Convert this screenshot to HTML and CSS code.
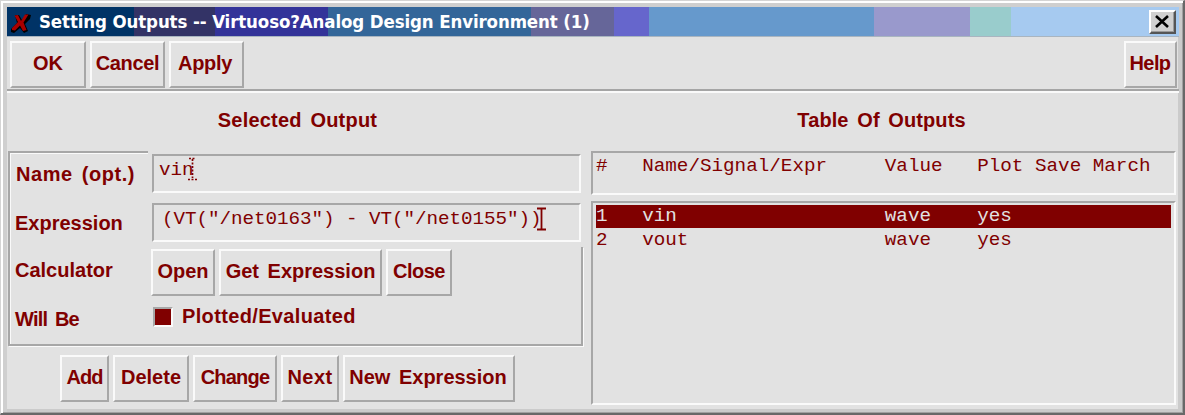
FILE: index.html
```html
<!DOCTYPE html>
<html lang="en">
<head>
<meta charset="utf-8">
<title>Setting Outputs</title>
<link rel="stylesheet" href="styles.css">
</head>
<body>
<main class="window">
  <header class="titlebar">
    <svg class="app-icon" width="20" height="22" viewBox="0 0 20 22"><path d="M4 3h4l3 5 4-6 5 1-1 4-5 5 3 7-4 2-4-5-6 5-3-1v-3l6-6z" fill="#000"/><path d="M3.500 3.500l3.500-.5 3 6 4-6.500h3.500l-5 8 3 7.500-3.500 1-3-5.500-5 5-3-.5v-2l6-6z" fill="#a80000"/></svg>
    <h1 class="title">Setting Outputs -- Virtuoso?Analog Design Environment (1)</h1>
    <button class="close" aria-label="Close window"><svg width="14" height="13" viewBox="0 0 14 13"><path d="M1 1l12 11M13 1L1 12" stroke="#000" stroke-width="2.6"/></svg></button>
  </header>
  <nav class="toolbar">
    <button class="btn ok">OK</button>
    <button class="btn cancel">Cancel</button>
    <button class="btn apply">Apply</button>
    <button class="btn help">Help</button>
  </nav>
  <div class="content">
    <section class="selected">
      <h2 class="heading">Selected Output</h2>
      <div class="fields">
        <label class="label name-label">Name (opt.)</label>
        <div class="field name-field">vin<svg class="caret" width="9" height="24" viewBox="0 0 9 24"><path d="M1 1.500h7M4.500 2v19M0 22.500h9" fill="none" stroke="#800000" stroke-width="1.7" stroke-dasharray="2 1.500"/></svg></div>
        <label class="label expr-label">Expression</label>
        <div class="field expr-field">(VT("/net0163") - VT("/net0155"))<svg class="caret" width="9" height="24" viewBox="0 0 9 24"><path d="M0 1.500h9M4.500 2v20M0 22.500h9" fill="none" stroke="#800000" stroke-width="1.8"/></svg></div>
      </div>
      <div class="options">
        <span class="label calc-label">Calculator</span>
        <div class="calc-buttons">
          <button class="btn open">Open</button>
          <button class="btn get">Get Expression</button>
          <button class="btn close-calc">Close</button>
        </div>
        <span class="label will-label">Will Be</span>
        <div class="check"><span class="box"></span><span class="label check-label">Plotted/Evaluated</span></div>
      </div>
      <div class="actions">
        <button class="btn add">Add</button>
        <button class="btn delete">Delete</button>
        <button class="btn change">Change</button>
        <button class="btn next">Next</button>
        <button class="btn new">New Expression</button>
      </div>
    </section>
    <section class="outputs">
      <h2 class="heading">Table Of Outputs</h2>
      <pre class="panel columns">#   Name/Signal/Expr     Value   Plot Save March</pre>
      <div class="panel list">
        <pre class="row active">1   vin                  wave    yes</pre>
        <pre class="row">2   vout                 wave    yes</pre>
      </div>
    </section>
  </div>
</main>
</body>
</html>
```
FILE: styles.css
```css
* { box-sizing: border-box; }
body { margin: 0; width: 1185px; height: 415px; overflow: hidden; }
.window {
  width: 1185px; height: 415px; padding: 3px 4px 3px 3px;
  background: #e2e2e2; color: #800000;
  border: 1px solid #d4d4d4; border-right: 2px solid #686868; border-bottom: 2px solid #686868;
  box-shadow: inset 2px 2px #fff, inset -1px -1px #a0a0a0, inset 6px 6px #cfcfcf, inset -5px -4px #cbcbcb;
  font: bold 20px "Liberation Sans", sans-serif;
  display: flex; flex-direction: column;
}
.titlebar {
  flex: none; height: 30px; margin: 3px 0 0 3px; padding: 0 3px 0 4px;
  display: flex; align-items: center; border-bottom: 1px solid #a9b5c0;
  background: linear-gradient(90deg, #003366 127px, #333366 127px 208px, #333399 208px 320.500px, #336699 320.500px 524px, #666699 524px 606.500px, #6666cc 606.500px 641.500px, #6699cc 641.500px 866.500px, #9999cc 866.500px 962.500px, #99cccc 962.500px 1003.500px, #a6caf0 1003.500px);
}
.app-icon { margin-top: 3px; }
.title { margin: 0 auto 0 8px; font: bold 18.500px "DejaVu Sans Condensed", "DejaVu Sans", sans-serif; letter-spacing: -0.120px; color: #fff; white-space: nowrap; }
.close {
  width: 27px; height: 24px; padding: 0 2px 1px 0; background: #d0d0d0;
  border: 2px solid; border-color: #fff #555 #555 #fff; box-shadow: inset -1px -1px #999;
  display: grid; place-items: center;
}
.toolbar {
  flex: none; height: 54px; margin-left: 3px; padding: 4px 2px 0 3px;
  display: flex; gap: 4px; align-items: flex-start;
  border-bottom: 2px solid #a5a5a5; box-shadow: 0 2px #fafafa;
}
.btn {
  flex: none; height: 47px; padding: 0 0 2px; background: #e2e2e2; color: inherit; font: inherit;
  word-spacing: 3px; white-space: nowrap;
  border: 2px solid; border-color: #fafafa #a7a7a7 #a7a7a7 #fafafa;
  display: flex; align-items: center; justify-content: center;
}
.ok { width: 76px; }
.cancel, .apply { width: 75px; letter-spacing: -0.350px; }
.apply { padding-right: 3px; }
.help { width: 53px; margin-left: auto; letter-spacing: -0.600px; padding-right: 1px; }
.content { display: flex; margin-left: 4px; height: 312px; }
.selected { width: 575px; flex: none; }
.outputs { width: 585px; margin-left: 8px; flex: none; }
.heading { margin: 0; height: 60px; padding-top: 17px; font: inherit; line-height: 24px; text-align: center; word-spacing: 3px; letter-spacing: 0.200px; }
.selected .heading { padding-left: 4px; }
.outputs .heading { padding-right: 4px; letter-spacing: 0.100px; }
.label { white-space: nowrap; word-spacing: 3px; line-height: 24px; }
.fields {
  height: 96px; display: grid; grid-template-columns: 142px 429px; grid-template-rows: 50px 46px;
  border-left: 2px solid #a7a7a7; box-shadow: inset 1px 0 #fafafa;
}
.name-label { width: 138px; padding: 9px 0 0 6px; border-top: 2px solid #a7a7a7; box-shadow: inset 0 1px #fafafa; letter-spacing: 0.550px; }
.expr-label { padding: 10px 0 0 5px; }
.field, .panel, .row { font: 19.250px "Liberation Mono", monospace; white-space: pre; margin: 0; }
.panel.list { white-space: normal; }
.field, .panel { border: 2px solid; border-color: #a7a7a7 #fafafa #fafafa #a7a7a7; }
.field { height: 39px; display: flex; align-items: flex-start; line-height: 24px; }
.name-field { margin-top: 3px; padding: 2px 0 0 5px; }
.expr-field { margin-top: 2px; padding: 2px 0 0 8px; letter-spacing: -0.050px; }
.caret { flex: none; margin-left: -5px; }
.name-field .caret { margin-left: -6px; margin-top: -1px; }
.options {
  height: 99px; display: grid; grid-template-columns: 141px auto; grid-template-rows: 49px auto;
  border: 2px solid #a7a7a7; border-top: 0; box-shadow: inset 1px 0 #fafafa, 1px 1px #fafafa;
}
.calc-label { padding: 11px 0 0 5px; }
.calc-buttons { padding-top: 2px; display: flex; gap: 4px; }
.open { width: 64px; }
.get { width: 163px; }
.close-calc { width: 66px; letter-spacing: -0.500px; }
.will-label { padding: 11px 0 0 5px; letter-spacing: -0.800px; }
.check { display: flex; padding: 8px 0 0 2px; }
.box { width: 20px; height: 20px; margin-top: 3px; background: #800000; border: 2px solid; border-color: #a7a7a7 #fafafa #fafafa #a7a7a7; }
.check-label { margin-left: 9px; letter-spacing: 0.350px; }
.actions { display: flex; gap: 4px; padding: 9px 0 0 52px; }
.add { width: 49px; letter-spacing: -1px; }
.delete { width: 76px; }
.change { width: 84px; letter-spacing: -0.800px; }
.next { width: 58px; letter-spacing: 0.400px; }
.new { width: 172px; padding-right: 2px; }
.columns { height: 44px; padding: 1px 0 0 3px; line-height: 24px; }
.list { height: 204px; margin-top: 6px; padding: 2px 3px 0; }
.row { height: 24px; line-height: 21px; padding-top: 1px; }
.row.active { height: 23px; margin-bottom: 1px; background: #800000; color: #e2e2e2; }
```
